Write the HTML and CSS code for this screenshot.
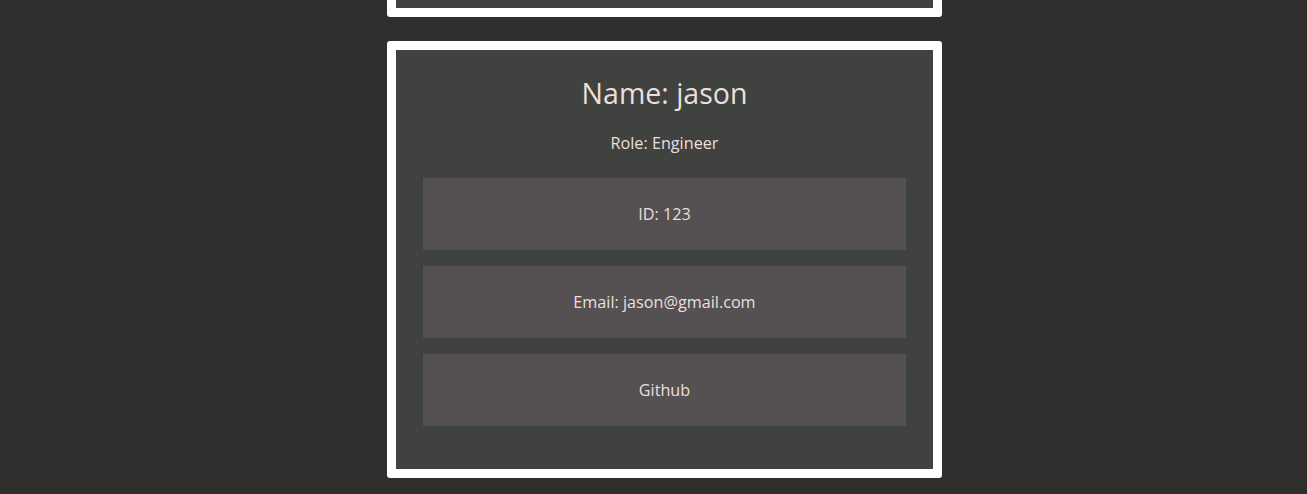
FILE: index.html
```html
<!DOCTYPE html>
<html>
<head>
<meta charset="utf-8">
<link rel="stylesheet" href="styles.css">
</head>
<body>
<main class="team">
  <section class="card card-prev"></section>
  <section class="card">
    <h2 class="card-name">Name: jason</h2>
    <p class="card-role">Role: Engineer</p>
    <ul class="card-list">
      <li class="card-item">ID: 123</li>
      <li class="card-item">Email: jason@gmail.com</li>
      <li class="card-item">Github</li>
    </ul>
  </section>
</main>
</body>
</html>
```

FILE: styles.css
```css
html, body {
  margin: 0;
  padding: 0;
  background: #302f2d;
  font-family: "Open Sans", "Liberation Sans", sans-serif;
  color: #ecdfdc;
  overflow: hidden;
}

.team {
  display: flex;
  flex-direction: column;
  align-items: center;
  gap: 24px;
  padding-left: 22px;
  margin-top: -200px;
}

.card {
  box-sizing: border-box;
  width: 555px;
  background: #404240;
  border: 9px solid #ffffff;
  border-radius: 3px;
  padding: 0 27px 43px 27px;
  text-align: center;
}

.card-prev {
  height: 217px;
  padding: 0;
}

.card-name {
  margin: 24px 0 19px;
  font-size: 28.5px;
  font-weight: 400;
  line-height: 39px;
}

.card-role {
  margin: 0 0 24px;
  font-size: 16.2px;
  line-height: 22px;
  font-weight: 500;
}

.card-list {
  list-style: none;
  margin: 0;
  padding: 0;
  display: flex;
  flex-direction: column;
  gap: 16px;
}

.card-item {
  height: 72px;
  display: flex;
  align-items: center;
  justify-content: center;
  background: #555152;
  font-size: 16.2px;
  font-weight: 500;
}
```
